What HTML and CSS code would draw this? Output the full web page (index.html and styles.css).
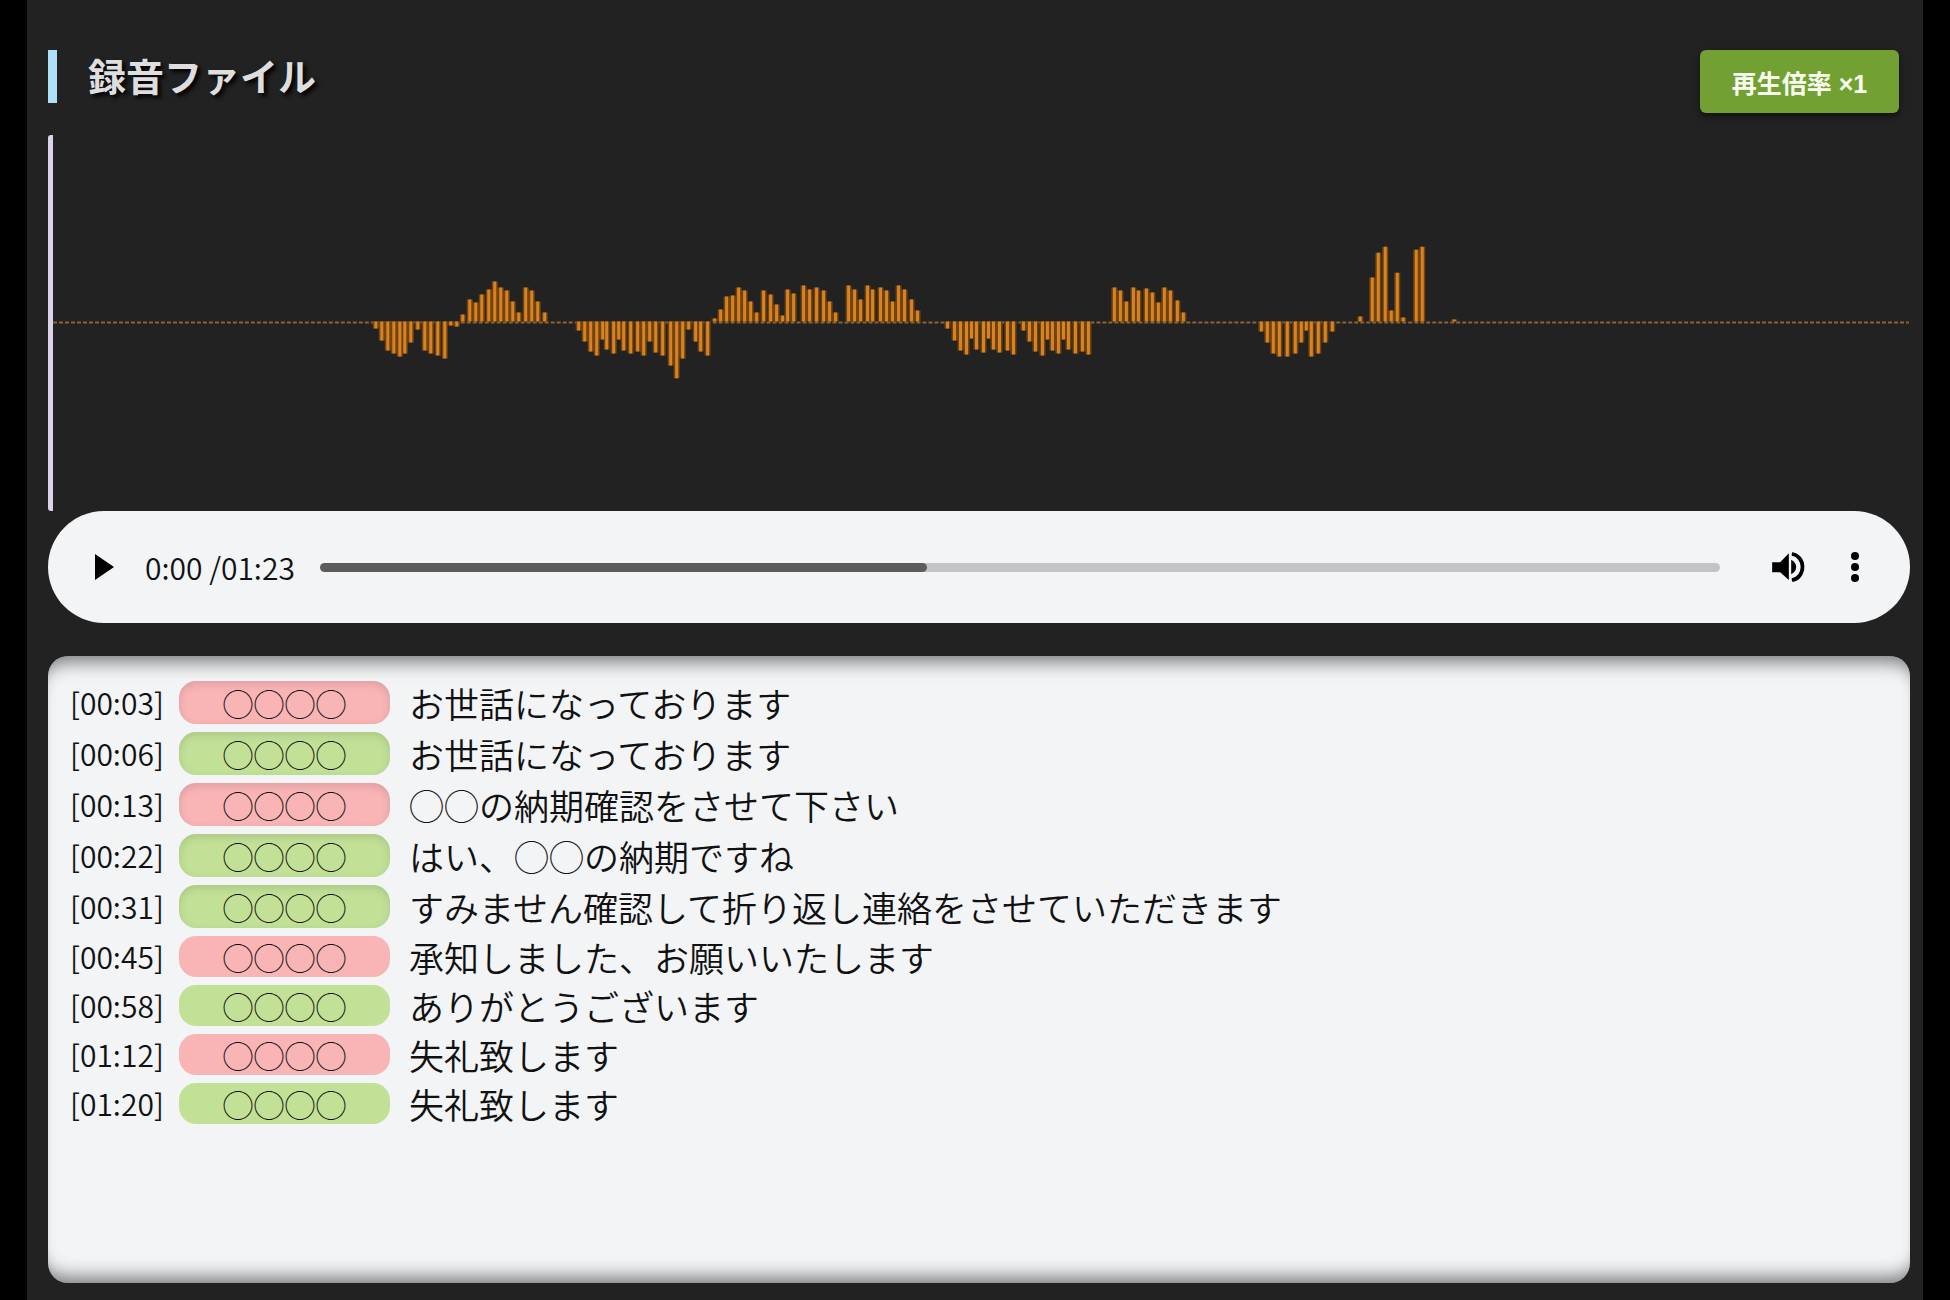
FILE: index.html
```html
<!DOCTYPE html>
<html lang="ja">
<head>
  <meta charset="UTF-8">
  <meta name="viewport" content="width=device-width, initial-scale=1.0">
  <title>録音ファイル</title>
  <link rel="stylesheet" href="styles.css">
</head>
<body>

<main class="container">
  <header class="header">
    <h1 class="title">録音ファイル</h1>
    <button type="button" class="btn-speed">再生倍率 ×1</button>
  </header>

  <div class="waveform">
    <svg id="waveSvg" viewBox="1 1 1863 377" preserveAspectRatio="none" role="img" aria-label="波形">
      <path class="wave-base" d="M6 189H1863"/>
      <path class="wave-shade" id="waveShade"/>
      <path class="wave-bars" id="waveBars"/>
    </svg>
  </div>

  <div class="player">
    <button type="button" class="icon-btn play" aria-label="再生">
      <svg width="19" height="26" viewBox="0 0 19 26"><path d="M0 0L19 13L0 26z"/></svg>
    </button>
    <span class="time">0:00 /01:23</span>
    <input type="range" class="seek" min="0" max="100" value="43" aria-label="再生位置">
    <button type="button" class="icon-btn volume" aria-label="音量">
      <svg width="33" height="30" viewBox="0 0 98 90">
        <path d="M0 31h24L50 4v80L24 61H0z"/>
        <path d="M57 23q15 8 15 22t-15 22z"/>
        <path class="wave-arc" d="M59 6C78 8 91 25 91 45S78 82 59 84"/>
      </svg>
    </button>
    <button type="button" class="icon-btn" aria-label="メニュー">
      <svg width="8" height="30" viewBox="0 0 8 30"><circle cx="4" cy="4" r="4"/><circle cx="4" cy="15" r="4"/><circle cx="4" cy="26" r="4"/></svg>
    </button>
  </div>

  <ol class="transcript">
    <li class="row"><time>[00:03]</time><span class="badge pink inset">◯◯◯◯</span><p>お世話になっております</p></li>
    <li class="row"><time>[00:06]</time><span class="badge green inset">◯◯◯◯</span><p>お世話になっております</p></li>
    <li class="row"><time>[00:13]</time><span class="badge pink inset">◯◯◯◯</span><p>◯◯の納期確認をさせて下さい</p></li>
    <li class="row"><time>[00:22]</time><span class="badge green inset">◯◯◯◯</span><p>はい、◯◯の納期ですね</p></li>
    <li class="row"><time>[00:31]</time><span class="badge green inset">◯◯◯◯</span><p>すみません確認して折り返し連絡をさせていただきます</p></li>
    <li class="row"><time>[00:45]</time><span class="badge pink">◯◯◯◯</span><p>承知しました、お願いいたします</p></li>
    <li class="row"><time>[00:58]</time><span class="badge green">◯◯◯◯</span><p>ありがとうございます</p></li>
    <li class="row"><time>[01:12]</time><span class="badge pink">◯◯◯◯</span><p>失礼致します</p></li>
    <li class="row"><time>[01:20]</time><span class="badge green">◯◯◯◯</span><p>失礼致します</p></li>
  </ol>
</main>

<script src="script.js"></script>
</body>
</html>
```
FILE: styles.css
```css
/* 全体 */
* {
  box-sizing: border-box;
}

body {
  margin: 0;
  background: #000;
  font-family: "Noto Sans CJK JP", sans-serif;
  color: #111;
}

.container {
  display: flex;
  flex-direction: column;
  min-height: 100vh;
  margin: 0 27px;
  padding: 50px 13px 17px 21px;
  background: #222;
}

/* ヘッダー */
.header {
  display: flex;
  justify-content: space-between;
  align-items: flex-start;
  height: 85px;
  padding-right: 11px;
}

.title {
  margin: 0;
  padding: 0 0 4px 31px;
  border-left: 9px solid #aee0f8;
  font-size: 38px;
  font-weight: 700;
  line-height: 49px;
  color: #dedede;
  text-shadow: 3px 3px 4px #000;
}

.btn-speed {
  width: 199px;
  height: 63px;
  border: none;
  border-radius: 6px;
  background: #73a033;
  box-shadow: 0 3px 6px rgba(0, 0, 0, 0.5);
  color: #f8fff0;
  font-family: "Liberation Sans", "Noto Sans CJK JP", sans-serif;
  font-size: 25px;
  font-weight: 700;
  cursor: pointer;
}

/* 波形 */
.waveform {
  height: 376px;
  border-left: 5px solid #dcd3ea;
  border-radius: 3px;
}

.waveform svg {
  display: block;
  width: calc(100% + 5px);
  height: 100%;
  margin-left: -5px;
}

.waveform path {
  fill: none;
}

.wave-base {
  stroke: #8f6234;
  stroke-width: 2;
  stroke-dasharray: 4 2;
}

.wave-shade {
  stroke: #704410;
  stroke-width: 6;
}

.wave-bars {
  stroke: #d88222;
  stroke-width: 3;
}

/* プレーヤー */
.player {
  display: flex;
  align-items: center;
  height: 112px;
  padding: 0 51px 0 47px;
  border-radius: 56px;
  background: #f2f4f6;
}

.icon-btn {
  display: flex;
  padding: 0;
  border: none;
  background: none;
  cursor: pointer;
}

.play {
  margin-right: 31px;
}

.time {
  width: 175px;
  font-size: 30px;
  font-weight: 350;
}

.seek {
  flex: 1;
  min-width: 0;
  height: 9px;
  margin: 0;
  border-radius: 5px;
  background: linear-gradient(to right, #5c5c5c 43%, #c3c4c5 43%);
  appearance: none;
}

.seek::-webkit-slider-thumb {
  width: 9px;
  height: 9px;
  border-radius: 50%;
  background: #5c5c5c;
  appearance: none;
}

.volume {
  margin: 0 46px 0 52px;
}

.wave-arc {
  fill: none;
  stroke: #000;
  stroke-width: 11;
}

/* 文字起こし */
.transcript {
  display: flex;
  flex: 1;
  flex-direction: column;
  gap: 8px;
  margin: 33px 0 0;
  padding: 25px 22px;
  border-radius: 20px;
  background: #f2f4f6;
  box-shadow:
    inset 0 20px 18px -14px rgba(0, 0, 0, 0.5),
    inset 0 -20px 18px -14px rgba(0, 0, 0, 0.5);
  list-style: none;
}

.row {
  display: grid;
  grid-template-columns: 90px 211px 1fr;
  align-items: center;
  gap: 19px;
}

.row time {
  font-size: 30px;
  font-weight: 350;
  line-height: 41px;
}

.row p {
  margin: 0;
  font-size: 35px;
  font-weight: 350;
  line-height: 41px;
}

.badge {
  border-radius: 17px;
  font-size: 31px;
  font-weight: 350;
  line-height: 41px;
  text-align: center;
}

.pink {
  background: #f9b4b6;
}

.green {
  background: #c2e197;
}

.inset {
  padding: 1px 0;
  box-shadow: inset 0 3px 8px rgba(0, 0, 0, 0.12);
}
```
FILE: script.js
```javascript
// 波形データ [x, 高さ] (正: 上向き, 負: 下向き)
const bars = [
  [329, -7], [335, -19], [341, -29], [347, -32], [353, -35], [358, -32], [364, -21], [371, -8],
  [378, -29], [384, -32], [391, -34], [398, -37], [404, -4], [410, -5],
  [416, 7], [423, 22], [429, 19], [435, 27], [442, 32], [448, 40], [454, 34], [460, 31],
  [466, 20], [472, 9], [479, 34], [485, 31], [491, 20], [498, 9],
  [532, -9], [538, -20], [544, -30], [550, -34], [556, -18], [560, -28], [567, -32], [572, -18],
  [577, -29], [584, -32], [591, -30], [597, -34], [603, -20], [609, -31], [616, -34], [624, -44],
  [630, -57], [636, -37], [642, -8], [649, -20], [654, -30], [661, -34],
  [668, 3], [674, 12], [680, 25], [686, 26], [692, 34], [698, 31], [704, 20], [710, 9],
  [717, 31], [724, 27], [730, 17], [736, 6], [741, 32], [747, 28], [757, 36], [763, 32],
  [770, 34], [777, 31], [783, 20], [789, 9],
  [802, 36], [808, 32], [814, 22], [821, 36], [826, 32], [834, 34], [840, 31], [846, 20],
  [852, 36], [858, 32], [865, 22], [871, 11],
  [901, -7], [908, -19], [914, -29], [920, -33], [925, -17], [930, -28], [937, -31], [942, -17],
  [947, -28], [953, -31], [961, -29], [967, -33],
  [977, -9], [983, -20], [989, -30], [996, -34], [1001, -18], [1006, -29], [1012, -32],
  [1017, -18], [1022, -28], [1029, -32], [1036, -30], [1042, -33],
  [1068, 34], [1074, 31], [1080, 20], [1087, 34], [1092, 31], [1100, 33], [1106, 29], [1112, 19],
  [1118, 34], [1124, 31], [1131, 21], [1137, 9],
  [1215, -10], [1221, -21], [1227, -32], [1233, -35], [1241, -35], [1249, -32], [1255, -21],
  [1260, -9], [1265, -35], [1272, -32], [1279, -21], [1286, -10],
  [1314, 5], [1326, 44], [1332, 69], [1339, 75], [1345, 11], [1351, 49], [1357, 4],
  [1370, 72], [1376, 75], [1408, 2]
];

const d = bars.map(([x, h]) => `M${x} 188V${188 - h}`).join('');
document.getElementById('waveShade').setAttribute('d', d);
document.getElementById('waveBars').setAttribute('d', d);
```
